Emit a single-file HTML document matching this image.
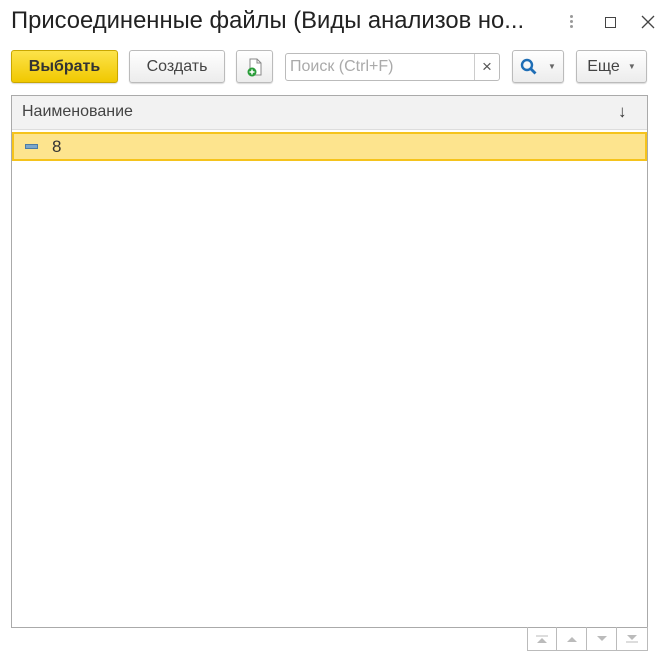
<!DOCTYPE html>
<html><head><meta charset="utf-8"><style>
*{box-sizing:border-box;margin:0;padding:0}
body{width:668px;height:662px;background:#fff;font-family:"Liberation Sans",Arial,sans-serif;position:relative;overflow:hidden;color:#333}
.a{position:absolute}
.btn{position:absolute;border:1px solid #bbb;border-radius:3px;background:linear-gradient(#fff,#ececec);box-shadow:0 1px 1px rgba(0,0,0,.15);font-size:16px;display:flex;align-items:center;justify-content:center;color:#444}
.nav{position:absolute;top:627px;width:30px;height:24px;border:1px solid #bbb;border-top:none;display:flex;align-items:center;justify-content:center}
</style></head><body>
<div class="a" style="left:11px;top:7px;font-size:23.8px;color:#222;white-space:nowrap">Присоединенные файлы (Виды анализов но...</div>
<div class="a" style="left:570px;top:15px;width:3px;height:3px;background:#999;border-radius:50%;box-shadow:0 5px 0 #999,0 10px 0 #999"></div>
<div class="a" style="left:605px;top:17px;width:11px;height:11px;border:1px solid #444"></div>
<svg class="a" style="left:641px;top:15px" width="14" height="14"><path d="M1 1L13 13M13 1L1 13" stroke="#444" stroke-width="1.3"/></svg>

<div class="btn" style="left:11px;top:50px;width:107px;height:33px;background:linear-gradient(#fde34a,#f0c800);border-color:#c9a700;font-weight:bold;color:#333">Выбрать</div>
<div class="btn" style="left:129px;top:50px;width:96px;height:33px">Создать</div>
<div class="btn" style="left:236px;top:50px;width:37px;height:33px">
<svg width="18" height="20"><path d="M4 2h7l4 4v12H4z" fill="#fff" stroke="#888"/><path d="M11 2v4h4" fill="none" stroke="#888"/><circle cx="6" cy="15" r="4.5" fill="#2a9d3a"/><path d="M6 12.5v5M3.5 15h5" stroke="#fff" stroke-width="1.5"/></svg></div>
<div class="a" style="left:285px;top:53px;width:215px;height:28px;border:1px solid #bbb;border-radius:3px"></div>
<div class="a" style="left:290px;top:58px;font-size:16px;color:#aaa">Поиск (Ctrl+F)</div>
<div class="a" style="left:474px;top:54px;width:1px;height:26px;background:#ccc"></div>
<div class="a" style="left:482px;top:57px;font-size:17px;color:#555">×</div>
<div class="btn" style="left:512px;top:50px;width:52px;height:33px">
<svg width="18" height="18" style="margin-right:10px"><circle cx="7" cy="7" r="5" fill="none" stroke="#1e6db5" stroke-width="2.4"/><path d="M11 11l4.5 4.5" stroke="#1e6db5" stroke-width="2.8"/></svg><span style="font-size:8px;color:#666">▼</span></div>
<div class="btn" style="left:576px;top:50px;width:71px;height:33px"><span style="margin-right:8px">Еще</span><span style="font-size:8px;color:#666">▼</span></div>

<div class="a" style="left:11px;top:95px;width:637px;height:533px;border:1px solid #aaa"></div>
<div class="a" style="left:12px;top:96px;width:635px;height:34px;background:#f2f2f2;border-bottom:1px solid #ddd"></div>
<div class="a" style="left:22px;top:103px;font-size:16px;color:#444">Наименование</div>
<div class="a" style="left:618px;top:102px;font-size:17px;color:#333">↓</div>
<div class="a" style="left:12px;top:132px;width:635px;height:29px;background:#fde48e;border:2px solid #f5c31c"></div>
<div class="a" style="left:25px;top:144px;width:13px;height:5px;background:#7ba7cc;border:1px solid #4d7ca3"></div>
<div class="a" style="left:52px;top:137px;font-size:17px;color:#333">8</div>

<div class="nav" style="left:527px"><svg width="12" height="8"><path d="M0 1h12" stroke="#bbb"/><path d="M1 8L6 3L11 8z" fill="#bbb"/></svg></div>
<div class="nav" style="left:557px;border-left:none"><svg width="12" height="6"><path d="M1 6L6 1L11 6z" fill="#bbb"/></svg></div>
<div class="nav" style="left:587px;border-left:none"><svg width="12" height="6"><path d="M1 0L6 5L11 0z" fill="#bbb"/></svg></div>
<div class="nav" style="left:617px;border-left:none;width:31px"><svg width="12" height="8"><path d="M1 0L6 5L11 0z" fill="#bbb"/><path d="M0 7h12" stroke="#bbb"/></svg></div>
</body></html>
